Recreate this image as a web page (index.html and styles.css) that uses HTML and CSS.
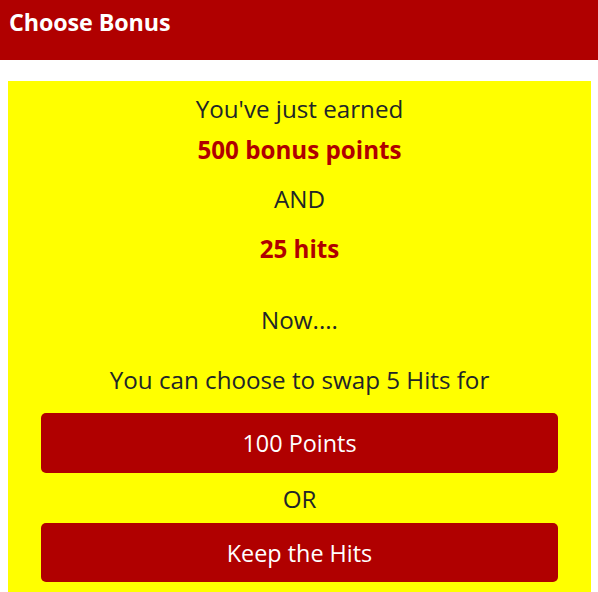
FILE: index.html
```html
<!DOCTYPE html>
<html>
<head>
<meta charset="utf-8">
<link rel="stylesheet" href="styles.css">
</head>
<body>
<header class="topbar"><h1 class="title">Choose Bonus</h1></header>
<main class="panel">
  <p class="line l1">You've just earned</p>
  <p class="line hl l2">500 bonus points</p>
  <p class="line l3">AND</p>
  <p class="line hl l4">25 hits</p>
  <p class="line l5">Now....</p>
  <p class="line l6">You can choose to swap 5 Hits for</p>
  <button class="btn b1">100 Points</button>
  <p class="line l7">OR</p>
  <button class="btn b2">Keep the Hits</button>
</main>
</body>
</html>
```
FILE: styles.css
```css
html, body { margin: 0; padding: 0; background: #fff; }
body { font-family: "Open Sans", "Noto Sans", sans-serif; color: #212529; height: 592px; overflow: hidden; }
.topbar { background: #b00000; height: 60px; box-sizing: border-box; padding: 6px 9px; }
.title { margin: 0; color: #fff; font-size: 23.3px; font-weight: 700; line-height: 32px; letter-spacing: -0.1px; }
.panel { margin: 21px 7px 0 8px; background: #ffff00; padding: 11px 33px 20px; display: flex; flex-direction: column; align-items: stretch; }
.line { margin: 0; text-align: center; font-size: 24.2px; line-height: 33px; }
.hl { color: #b00000; font-weight: 700; }
.l2 { margin-top: 8px; }
.l3 { margin-top: 16px; }
.l4 { margin-top: 17px; }
.l5 { margin-top: 38px; }
.l6 { margin-top: 27px; }
.btn { margin-top: 17px; height: 60px; border: none; border-radius: 5px; background: #b00000; color: #fff; font-family: inherit; font-size: 23.4px; padding: 0; }
.l7 { margin-top: 9px; }
.b2 { margin-top: 8px; height: 59px; }
```
